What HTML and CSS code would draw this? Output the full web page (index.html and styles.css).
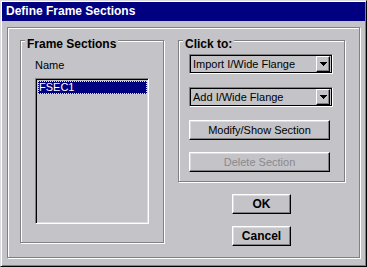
FILE: index.html
```html
<!DOCTYPE html>
<html>
<head>
<meta charset="utf-8">
<title>Define Frame Sections</title>
<link rel="stylesheet" href="styles.css">
</head>
<body>
<div class="window">
  <div class="titlebar">Define Frame Sections</div>
  <div class="panel">
    <div class="group group-left">
      <div class="group-title">Frame Sections</div>
      <div class="field-label">Name</div>
      <div class="listbox">
        <div class="list-item selected">FSEC1</div>
      </div>
    </div>
    <div class="right-col">
      <div class="group group-right">
        <div class="group-title">Click to:</div>
        <div class="combo combo-first">
          <span class="combo-text">Import I/Wide Flange</span>
          <span class="combo-btn"><svg width="7" height="4" viewBox="0 0 7 4"><path d="M0 0h7v1H0zM1 1h5v1H1zM2 2h3v1H2zM3 3h1v1H3z" fill="#000"/></svg></span>
        </div>
        <div class="combo combo-next">
          <span class="combo-text">Add I/Wide Flange</span>
          <span class="combo-btn"><svg width="7" height="4" viewBox="0 0 7 4"><path d="M0 0h7v1H0zM1 1h5v1H1zM2 2h3v1H2zM3 3h1v1H3z" fill="#000"/></svg></span>
        </div>
        <button class="btn btn-wide btn-modify">Modify/Show Section</button>
        <button class="btn btn-wide btn-delete" disabled>Delete Section</button>
      </div>
      <button class="btn btn-dialog btn-ok">OK</button>
      <button class="btn btn-dialog btn-cancel">Cancel</button>
    </div>
  </div>
</div>
</body>
</html>
```
FILE: styles.css
```css
* {
  box-sizing: border-box;
}

body {
  margin: 0;
  background: #c4c3c7;
  font-family: "Liberation Sans", Arial, sans-serif;
  font-size: 11px;
  color: #000;
}

.window {
  width: 367px;
  height: 267px;
  background: #c4c3c7;
  border: 1px solid;
  border-color: #dcdbdf #000 #000 #dcdbdf;
  box-shadow: inset 1px 1px 0 #fff, inset -1px -1px 0 #808080;
  padding: 1px;
}

.titlebar {
  height: 19px;
  background: #000080;
  color: #fff;
  font-weight: bold;
  font-size: 12px;
  line-height: 19px;
  padding-left: 4px;
  white-space: nowrap;
}

.panel {
  margin: 6px 0 0 5px;
  width: 353px;
  height: 231px;
  border: 1px solid #808080;
  box-shadow: 1px 1px 0 #fff, inset 1px 1px 0 #fff;
  display: flex;
  align-items: flex-start;
  gap: 14px;
  padding: 12px 0 0 12px;
}

.group {
  border: 1px solid #808080;
  box-shadow: 1px 1px 0 #fff, inset 1px 1px 0 #fff;
}

.group-left {
  width: 144px;
  height: 203px;
}

.group-right {
  width: 167px;
  height: 142px;
}

.group-title {
  width: max-content;
  margin: -4px 0 0 4px;
  padding: 0 2px;
  background: #c4c3c7;
  font-weight: bold;
  font-size: 12px;
  line-height: 14px;
  white-space: nowrap;
}

.field-label {
  margin: 8px 0 0 14px;
  line-height: 13px;
}

.listbox {
  margin: 6px 0 0 14px;
  width: 114px;
  height: 146px;
  border: 1px solid;
  border-color: #808080 #fff #fff #808080;
  box-shadow: inset 1px 1px 0 #000, inset -1px -1px 0 #dcdbdf;
  padding: 2px 1px 1px 2px;
}

.list-item {
  height: 13px;
  line-height: 11px;
  white-space: nowrap;
}

.list-item.selected {
  background: #000080;
  color: #fff;
  border: 1px dotted #f0f0a8;
}

.right-col {
  width: 167px;
  display: flex;
  flex-direction: column;
  align-items: center;
}

.group-right .combo,
.group-right .btn {
  margin-left: 10px;
}

.combo {
  display: flex;
  align-items: center;
  width: 144px;
  height: 20px;
  border: 1px solid;
  border-color: #808080 #fff #fff #808080;
  box-shadow: inset 1px 1px 0 #000, inset -1px -1px 0 #000;
  padding: 1px;
}

.combo-first {
  margin-top: 3px;
}

.combo-next {
  margin-top: 13px;
}

.combo-text {
  flex: 1;
  padding-left: 2px;
  line-height: 16px;
  white-space: nowrap;
}

.combo-btn {
  width: 14px;
  height: 16px;
  margin-right: 1px;
  display: flex;
  align-items: center;
  justify-content: center;
  border: 1px solid;
  border-color: #fff #000 #000 #fff;
  box-shadow: inset -1px -1px 0 #808080;
  background: #c4c3c7;
}

.combo-btn svg {
  display: block;
}

.btn {
  display: block;
  height: 20px;
  padding: 0;
  margin: 0;
  font-family: "Liberation Sans", Arial, sans-serif;
  font-size: 11px;
  color: #000;
  background: #c4c3c7;
  border: 1px solid;
  border-color: #fff #000 #000 #fff;
  box-shadow: inset -1px -1px 0 #808080, inset 1px 1px 0 #dcdbdf;
  line-height: 16px;
  text-align: center;
  white-space: nowrap;
}

.btn-wide {
  width: 141px;
}

.btn-modify {
  margin-top: 13px;
}

.btn-delete {
  margin-top: 12px;
  color: #8a898d;
}

.btn-dialog {
  width: 59px;
  font-weight: bold;
  font-size: 12px;
  margin-top: 12px;
}
```
